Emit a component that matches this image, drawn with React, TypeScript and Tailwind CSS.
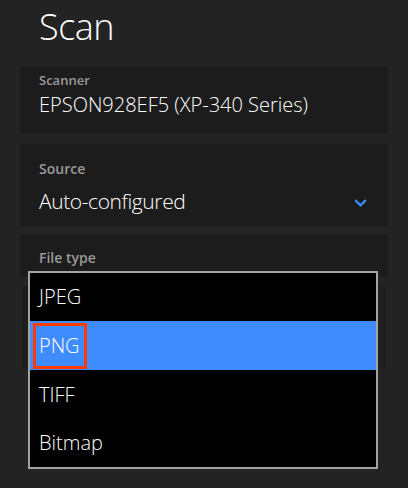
import React from "react";

const font = { fontFamily: '"Open Sans", "Noto Sans", sans-serif' };

export default function App() {
  return (
    <div
      className="relative w-[408px] h-[488px] overflow-hidden bg-[#232323] text-white"
      style={font}
    >
      <div className="flex flex-col px-[20px]">
        <div className="h-[66px] pl-[19px] pt-[2px] text-[36px] font-light leading-[50px] tracking-[-0.5px]">
          Scan
        </div>
        <div className="flex flex-col h-[68px] bg-[#1c1c1c] pl-[19px] pt-[4px]">
          <span className="text-[13px] font-semibold text-[#9a9a9a] leading-[20px]">Scanner</span>
          <span className="text-[20px] font-[350] leading-[30px] tracking-[0px]">EPSON928EF5 (XP-340 Series)</span>
        </div>
        <div className="mt-[10px] flex flex-col h-[82px] bg-[#1c1c1c] pl-[19px] pr-[21px] pt-[14px]">
          <span className="text-[14px] font-semibold text-[#9a9a9a] leading-[22px]">Source</span>
          <div className="flex items-center justify-between mt-[4px]">
            <span className="text-[21px] font-[350] leading-[34px] tracking-[-0.4px]">Auto-configured</span>
            <svg width="13" height="8" viewBox="0 0 13 8" className="mt-[3px]">
              <path d="M1.2 1.2 L6.5 6.3 L11.8 1.2" fill="none" stroke="#3b8cf5" strokeWidth="2.4" />
            </svg>
          </div>
        </div>
        <div className="mt-[8px] flex flex-col h-[43px] bg-[#1c1c1c] pl-[19px] pt-[13px]">
          <span className="text-[14px] font-semibold text-[#9a9a9a] leading-[22px]">File type</span>
        </div>
        <div className="mt-[10px] mx-[2px] h-[81px] bg-[#1e1e1e]" />
      </div>

      <div className="absolute left-[28px] top-[271px] w-[350px] h-[198px] border-2 border-[#a3a3a3] bg-black flex flex-col font-[350]">
        <div className="h-[48px] flex items-center pl-[9px] text-[20px]">JPEG</div>
        <div className="h-[49px] flex items-center pl-[3px] bg-[#3f8cff] text-[20px]">
          <div className="h-[46px] w-[54px] border-[3px] border-[#ff3c00] flex items-center pl-[3px]">PNG</div>
        </div>
        <div className="h-[49px] flex items-center pl-[9px] text-[20px]">TIFF</div>
        <div className="h-[48px] flex items-center pl-[9px] text-[20px]">Bitmap</div>
      </div>
    </div>
  );
}
